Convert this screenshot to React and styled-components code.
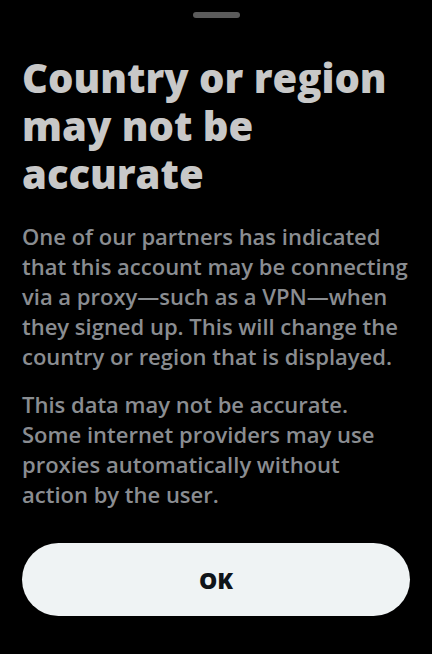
import React from "react";
import styled, { createGlobalStyle } from "styled-components";

const Global = createGlobalStyle`
  html, body { margin: 0; padding: 0; background: #000; }
  body { font-family: "Open Sans", "Liberation Sans", sans-serif; -webkit-font-smoothing: antialiased; }
  * { box-sizing: border-box; }
`;

const Sheet = styled.div`
  width: 432px;
  height: 654px;
  background: #000;
  display: flex;
  flex-direction: column;
  padding: 12px 22px 0;
`;

const Handle = styled.div`
  align-self: center;
  width: 47px;
  height: 6px;
  border-radius: 3px;
  background: #5b5b5b;
`;

const Title = styled.h1`
  margin: 36px 0 0;
  font-size: 40px;
  line-height: 48px;
  font-weight: 800;
  color: #c8c8c8;
  letter-spacing: 0;
`;

const Paragraph = styled.p`
  margin: ${(p) => (p.$first ? "23px" : "18px")} 0 0;
  font-size: 22px;
  line-height: 30px;
  font-weight: 600;
  color: #8a8d91;
`;

const Button = styled.button`
  margin-top: 34px;
  width: 388px;
  height: 73px;
  border: none;
  border-radius: 37px;
  background: #eff3f4;
  color: #0f1419;
  font-family: inherit;
  font-size: 23px;
  font-weight: 800;
  cursor: pointer;
`;

export default function App() {
  return (
    <>
      <Global />
      <Sheet>
        <Handle />
        <Title>Country or region may not be accurate</Title>
        <Paragraph $first>
          One of our partners has indicated that this account may be connecting
          via a proxy—such as a VPN—when they signed up. This will change the
          country or region that is displayed.
        </Paragraph>
        <Paragraph>
          This data may not be accurate. Some internet providers may use proxies
          automatically without action by the user.
        </Paragraph>
        <Button>OK</Button>
      </Sheet>
    </>
  );
}
